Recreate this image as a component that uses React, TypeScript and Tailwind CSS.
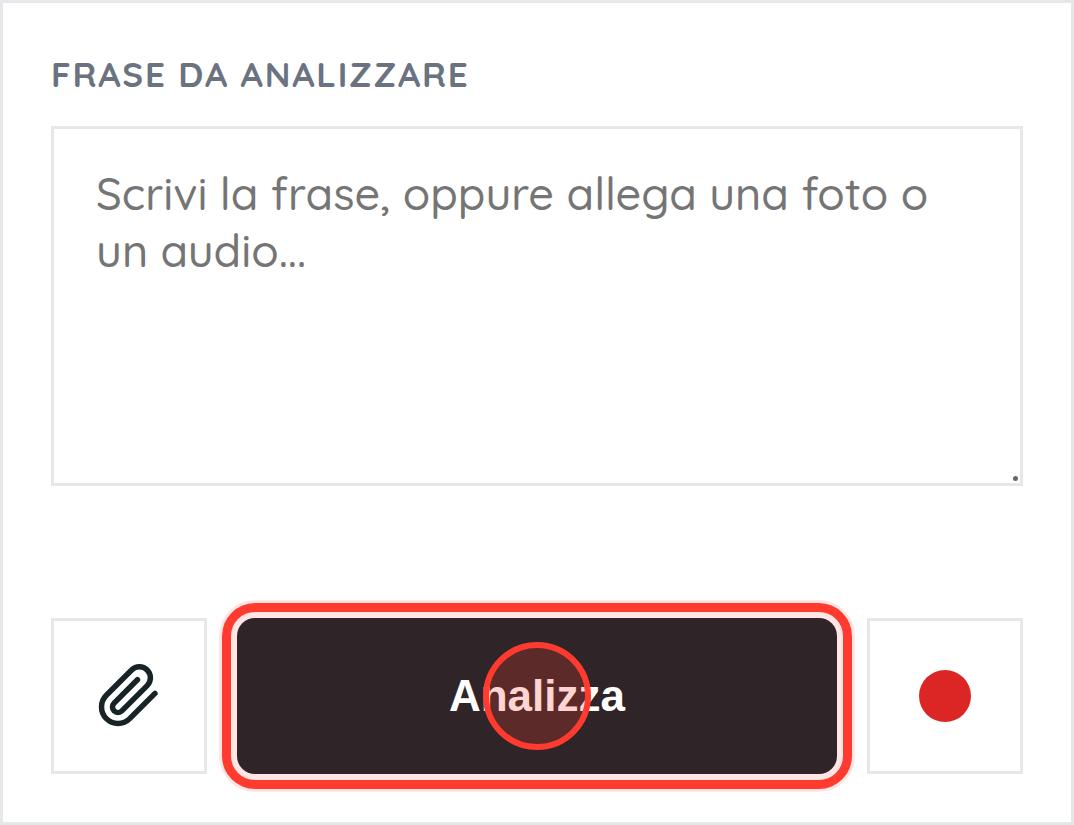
import { useState } from "react";

export default function App() {
  const [text, setText] = useState("");

  return (
    <main className="min-h-screen flex flex-col border-3 border-[#e5e7eb] bg-white p-12 font-['Quicksand','Lato',sans-serif]">
      <label
        htmlFor="phrase"
        className="mb-7 text-[35px] leading-[47px] font-bold tracking-wider text-[#6b7280] uppercase"
      >
        Frase da analizzare
      </label>

      <div className="relative flex">
        <textarea
          id="phrase"
          value={text}
          onChange={(e) => setText(e.target.value)}
          placeholder="Scrivi la frase, oppure allega una foto o un audio..."
          className="block h-[360px] w-full resize-none border-3 border-[#e5e7eb] bg-white px-[42px] py-9 text-[45px] leading-[57px] font-medium text-[#172326] outline-none placeholder:text-[#757575]"
        />
        <span
          aria-hidden="true"
          className="absolute right-[5px] bottom-[5px] size-[5px] rounded-full bg-[#666666]"
        />
      </div>

      <div className="mt-auto flex gap-[30px]">
        <button
          type="button"
          aria-label="Allega un file"
          className="flex size-[156px] shrink-0 items-center justify-center border-3 border-[#e5e7eb] bg-white text-[#172326]"
        >
          <svg
            viewBox="0 0 24 24"
            className="size-[66px]"
            fill="none"
            stroke="currentColor"
            strokeWidth="2"
            strokeLinecap="round"
            strokeLinejoin="round"
          >
            <path d="M21.44 11.05l-9.19 9.19a6 6 0 0 1-8.49-8.49l9.19-9.19a4 4 0 0 1 5.66 5.66l-9.2 9.19a2 2 0 0 1-2.83-2.83l8.49-8.48" />
          </svg>
        </button>

        <button
          type="button"
          className="relative flex h-[156px] flex-1 items-center justify-center rounded-[18px] bg-[#2f2528] font-['Liberation_Sans',Arial,sans-serif] text-[44px] font-bold text-white shadow-[0_0_0_6px_#ffe6e4,0_0_0_15px_#ff3b30,0_0_0_18px_#ffe6e4]"
        >
          Analizza
          <span
            aria-hidden="true"
            className="absolute inset-0 m-auto size-[108px] rounded-full border-6 border-[#ff3b30] bg-[#ff3b30]/22"
          />
        </button>

        <button
          type="button"
          aria-label="Registra un audio"
          className="flex size-[156px] shrink-0 items-center justify-center border-3 border-[#e5e7eb] bg-white"
        >
          <span className="size-[52px] rounded-full bg-[#dc2626]" />
        </button>
      </div>
    </main>
  );
}
